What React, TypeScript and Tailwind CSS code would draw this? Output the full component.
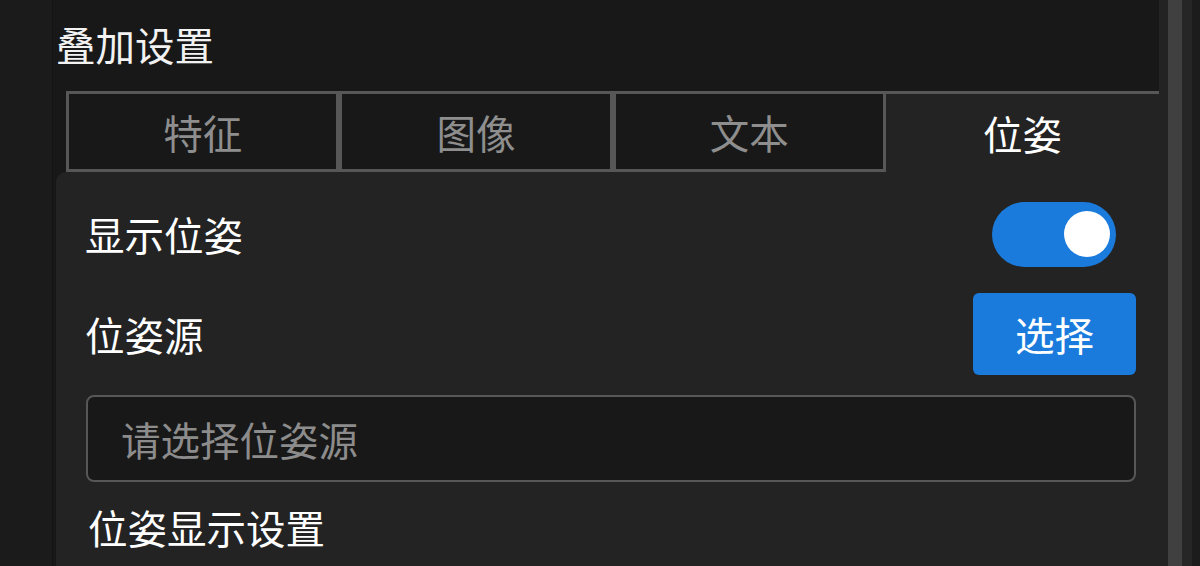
import React from 'react';

const tabs = ['特征', '图像', '文本', '位姿'];

const App = () => {
  const active = 3;
  return (
    <div
      className="flex w-[1200px] h-[566px] overflow-hidden bg-[#1b1b1b] text-[39.5px] leading-none"
      style={{ fontFamily: '"Microsoft YaHei", "Noto Sans CJK SC", "Noto Sans", sans-serif' }}
    >
      <div className="w-[52px] shrink-0 bg-[#1b1b1b]" />
      <div className="w-px shrink-0 bg-[#141414]" />

      <div className="w-[1106px] shrink-0 flex flex-col bg-[#181818]">
        <div className="h-[91px] flex items-center pl-[3px] pb-[4px] text-[#f2f2f2]">叠加设置</div>

        <div className="ml-[13px] grid grid-cols-4 h-[81px] border-t-[3px] border-[#575757]">
          {tabs.map((t, i) =>
            i === active ? (
              <div key={t} className="flex items-center justify-center bg-[#232323] text-white">
                {t}
              </div>
            ) : (
              <div
                key={t}
                className="flex items-center justify-center bg-[#181818] text-[#8e8e8e] border-x-[3px] border-b-[3px] border-[#575757]"
              >
                {t}
              </div>
            )
          )}
        </div>

        <div className="flex-1 ml-[3px] rounded-tl-[10px] bg-[#232323] pl-[29px] pr-[23px] pt-[21px]">
          <div className="h-[82px] flex items-center justify-between text-white">
            <span>显示位姿</span>
            <div className="mr-[20px] w-[124px] h-[65px] rounded-full bg-[#1a7bdc] flex items-center justify-end pr-[6px]">
              <div className="w-[46px] h-[46px] rounded-full bg-white" />
            </div>
          </div>

          <div className="mt-[18px] h-[82px] flex items-center justify-between text-white">
            <span>位姿源</span>
            <button className="w-[163px] h-[82px] rounded-[6px] bg-[#1a7bdc] text-white flex items-center justify-center">
              选择
            </button>
          </div>

          <div className="mt-[20px] ml-[1px] h-[87px] rounded-[8px] border-2 border-[#575757] bg-[#181818] flex items-center pl-[33px] text-[#8c8c8c]">
            请选择位姿源
          </div>

          <div className="mt-[25px] pl-[3px] text-white">位姿显示设置</div>
        </div>
      </div>

      <div className="w-[9px] shrink-0 bg-[#232323]" />
      <div className="w-[14px] shrink-0 bg-[#404040]" />
      <div className="w-[10px] shrink-0 bg-[#262626]" />
      <div className="flex-1 bg-[#1c1c1c]" />
    </div>
  );
};

export default App;
